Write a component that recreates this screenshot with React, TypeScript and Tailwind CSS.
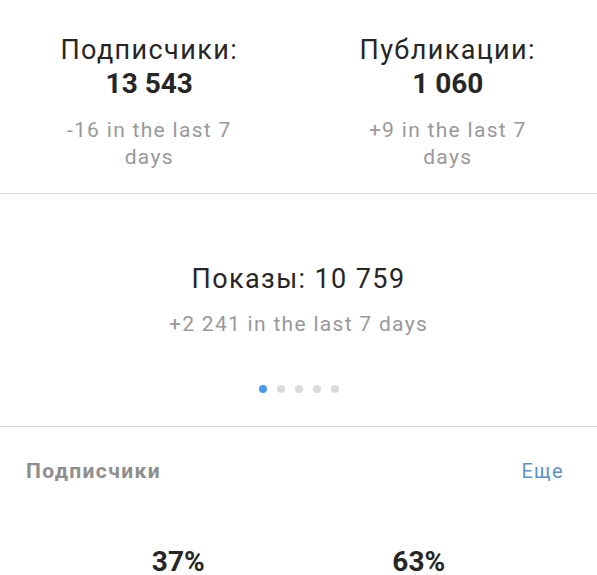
import React from "react";

export default function App() {
  const font = { fontFamily: "Roboto, 'Noto Sans', sans-serif" };
  return (
    <div className="w-[597px] h-[575px] overflow-hidden bg-white" style={font}>
      {/* Top stats */}
      <div className="grid grid-cols-2 pt-[33px] pb-[22px] border-b border-[#dbdbdb]">
        {[
          { t: "Подписчики:", n: "13 543", s: "-16 in the last 7 days" },
          { t: "Публикации:", n: "1 060", s: "+9 in the last 7 days" },
        ].map((c) => (
          <div key={c.t} className="flex flex-col items-center text-center">
            <div className="text-[27px] leading-[34px] tracking-[1.4px] text-[#262626]">{c.t}</div>
            <div className="text-[28px] leading-[34px] font-bold text-[#262626]">{c.n}</div>
            <div className="mt-[16px] max-w-[200px] text-[21px] leading-[27px] tracking-[1.3px] text-[#999999]">{c.s}</div>
          </div>
        ))}
      </div>

      {/* Impressions */}
      <div className="flex flex-col items-center pt-[68px] pb-[33px] border-b border-[#dbdbdb]">
        <div className="text-[27px] leading-[34px] tracking-[1.4px] text-[#262626]">Показы: 10 759</div>
        <div className="mt-[15px] text-[21px] leading-[27px] tracking-[1.3px] text-[#999999]">+2 241 in the last 7 days</div>
        <div className="mt-[47px] flex gap-[10px]">
          <span className="w-[8px] h-[8px] rounded-full bg-[#4a9ded]" />
          <span className="w-[8px] h-[8px] rounded-full bg-[#dbdbdb]" />
          <span className="w-[8px] h-[8px] rounded-full bg-[#dbdbdb]" />
          <span className="w-[8px] h-[8px] rounded-full bg-[#dbdbdb]" />
          <span className="w-[8px] h-[8px] rounded-full bg-[#dbdbdb]" />
        </div>
      </div>

      {/* Followers section */}
      <div className="flex items-center justify-between pl-[26px] pr-[33px] pt-[31px]">
        <div className="text-[21px] leading-[27px] font-bold tracking-[1.4px] text-[#8e8e8e]">Подписчики</div>
        <div className="text-[20px] leading-[27px] tracking-[1.3px] text-[#5b93c8]">Еще</div>
      </div>
      <div className="grid grid-cols-2 px-[58px] pt-[60px]">
        <div className="text-center text-[28px] leading-[34px] font-bold text-[#262626]">37%</div>
        <div className="text-center text-[28px] leading-[34px] font-bold text-[#262626]">63%</div>
      </div>
    </div>
  );
}
